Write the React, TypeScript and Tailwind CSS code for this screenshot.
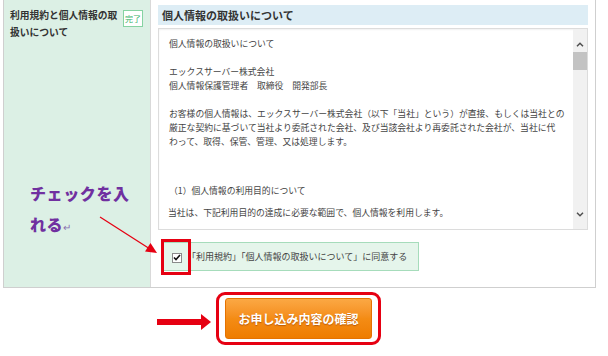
export default function App() {
  return (
    <div className="relative w-[608px] h-[356px] bg-white overflow-hidden font-['Noto_Sans_CJK_JP',sans-serif] text-[#333]">
      <div className="ml-[3px] flex h-[288px] w-[593px] border-x border-b border-[#cfcfcf]">
        <div className="w-[146px] shrink-0 bg-[#dcf0e5] flex items-start pl-[6px] pt-[7px]">
          <div className="w-[113px] text-[9.75px] font-bold leading-[17px] whitespace-nowrap">
            利用規約と個人情報の取
            <br />
            扱いについて
          </div>
          <div className="mt-[3px] w-[20px] h-[17px] border border-[#86d3a2] bg-white text-[#3cb36a] text-[8px] leading-[15px] flex items-center justify-center whitespace-nowrap overflow-hidden">
            完了
          </div>
        </div>
        <div className="flex-1 border-l border-[#d9d9d9] bg-white px-[7px] pt-[5px]">
          <div className="h-[20px] bg-[#ddedf5] pl-[4px] text-[11px] font-bold leading-[20px]">
            個人情報の取扱いについて
          </div>
          <div className="mt-[3px] h-[202px] border border-[#dcdcdc] flex shadow-[inset_0_1px_2px_rgba(0,0,0,0.06)]">
            <div className="flex-1 pl-[10px] pt-[8px] text-[8.8px] leading-[14px] whitespace-nowrap text-[#444]">
              <div className="h-[14px]">個人情報の取扱いについて</div>
              <div className="h-[14px]"></div>
              <div className="h-[14px]">エックスサーバー株式会社</div>
              <div className="h-[14px]">個人情報保護管理者　取締役　開発部長</div>
              <div className="h-[14px]"></div>
              <div className="h-[14px]">お客様の個人情報は、エックスサーバー株式会社（以下「当社」という）が直接、もしくは当社との</div>
              <div className="h-[14px]">厳正な契約に基づいて当社より委託された会社、及び当該会社より再委託された会社が、当社に代</div>
              <div className="h-[14px]">わって、取得、保管、管理、又は処理します。</div>
              <div className="h-[35px]"></div>
              <div className="h-[14px]">（1）個人情報の利用目的について</div>
              <div className="h-[8px]"></div>
              <div className="h-[14px] -ml-[1px]">当社は、下記利用目的の達成に必要な範囲で、個人情報を利用します。</div>
            </div>
            <div className="w-[14px] bg-[#f1f1f1] flex flex-col">
              <div className="h-[23px] flex items-end justify-center pb-[5px]">
                <svg width="8" height="5" viewBox="0 0 8 5">
                  <path d="M1 4.2 L4 1.2 L7 4.2" fill="none" stroke="#505050" strokeWidth="1.5" />
                </svg>
              </div>
              <div className="h-[18px] bg-[#c3c3c3]"></div>
              <div className="flex-1"></div>
              <div className="h-[23px] flex items-start justify-center pt-[6px]">
                <svg width="8" height="5" viewBox="0 0 8 5">
                  <path d="M1 0.8 L4 3.8 L7 0.8" fill="none" stroke="#505050" strokeWidth="1.5" />
                </svg>
              </div>
            </div>
          </div>
          <div className="mt-[12px] ml-[4px] w-[257px] h-[29px] border border-[#a6dcbb] bg-[#e5f5eb] flex items-center pl-[9px]">
            <div className="w-[10px] h-[10px] border border-[#8a8a8a] bg-white flex items-center justify-center mt-[2px]">
              <svg width="8" height="7" viewBox="0 0 8 7">
                <path d="M1 3.5 L3 5.6 L7 1" fill="none" stroke="#111" strokeWidth="1.6" />
              </svg>
            </div>
            <div className="ml-[5px] text-[9px] leading-[12px] whitespace-nowrap text-[#444]">
              「利用規約」「個人情報の取扱いについて」に同意する
            </div>
          </div>
        </div>
      </div>

      <div className="flex items-start mt-[4px] ml-[157px]">
        <svg width="55" height="16" viewBox="0 0 55 16" className="mt-[22px]">
          <rect x="0" y="5" width="45" height="6" fill="#e60012" />
          <path d="M44 0 L54 8 L44 16 Z" fill="#e60012" />
        </svg>
        <div className="ml-[4px] w-[165px] h-[53px] border-[3px] border-[#e60012] rounded-[9px] px-[6px] pt-[3px]">
          <div className="h-[41px] rounded-[3px] border border-[#e57200] bg-gradient-to-b from-[#fba843] via-[#f48c14] to-[#ee7c00] flex items-center justify-center text-white font-bold text-[12px] [text-shadow:0_1px_1px_rgba(150,60,0,0.6)] whitespace-nowrap">
            お申し込み内容の確認
          </div>
        </div>
      </div>

      <div className="absolute left-[30px] top-[178px] text-[16px] font-black leading-[31px] tracking-[0.6px] text-[#7030a0] whitespace-nowrap">
        チェックを入
        <br />
        れる<span className="text-[10px] font-normal text-[#8a6fb0]">↵</span>
      </div>

      <svg className="absolute left-[96px] top-[212px]" width="66" height="46" viewBox="0 0 66 46">
        <line x1="4" y1="5" x2="54" y2="37" stroke="#e60012" strokeWidth="1.2" />
        <path d="M61 41 L49 39.5 L54.5 31 Z" fill="#e60012" />
      </svg>

      <div className="absolute left-[161px] top-[239px] w-[30px] h-[36px] border-[3px] border-[#e60012]"></div>
    </div>
  );
}
